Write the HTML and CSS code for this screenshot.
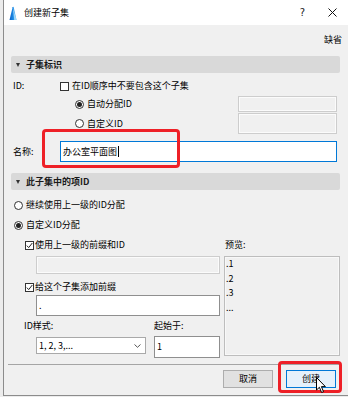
FILE: index.html
```html
<!DOCTYPE html>
<html>
<head>
<meta charset="utf-8">
<title>创建新子集</title>
<link rel="stylesheet" href="styles.css">
</head>
<body>
<div class="window">
  <div class="titlebar">
    <svg class="appicon" width="8" height="15" viewBox="0 0 8 15">
      <defs>
        <linearGradient id="g" x1="0" y1="0" x2="1" y2="0">
          <stop offset="0" stop-color="#0a62c8"/>
          <stop offset="0.55" stop-color="#1e8ee8"/>
          <stop offset="1" stop-color="#7cc4f4"/>
        </linearGradient>
      </defs>
      <path d="M0.5 14 L3.6 1.2 Q4 0.4 4.6 1 L7.6 14 Z" fill="url(#g)"/>
      <path d="M3.9 2 L7.6 14 L5.2 14 Z" fill="#9fd6f8"/>
    </svg>
    <span class="title">创建新子集</span>
    <span class="help">?</span>
    <svg class="close" width="9" height="9" viewBox="0 0 9 9"><path d="M0.5 0.5 L8.5 8.5 M8.5 0.5 L0.5 8.5" stroke="#111" stroke-width="1"/></svg>
  </div>

  <div class="content">
    <div class="defaults">缺省</div>

    <div class="sechead"><span class="tri"></span>子集标识</div>
    <div class="row r-id">
      <span class="lbl">ID:</span>
      <span class="cb"></span>
      <span>在ID顺序中不要包含这个子集</span>
    </div>
    <div class="row r-auto">
      <span class="radio on"></span>
      <span class="grow">自动分配ID</span>
      <span class="dbox b1"></span>
    </div>
    <div class="row r-custom">
      <span class="radio"></span>
      <span class="grow">自定义ID</span>
      <span class="dbox b2"></span>
    </div>
    <div class="row r-name">
      <span class="lbl">名称:</span>
      <div class="nameinput">办公室平面图<span class="caret"></span></div>
    </div>

    <div class="sechead sec2"><span class="tri"></span>此子集中的项ID</div>
    <div class="row r-inherit">
      <span class="radio"></span>
      <span>继续使用上一级的ID分配</span>
    </div>
    <div class="row r-customid">
      <span class="radio on"></span>
      <span>自定义ID分配</span>
    </div>

    <div class="idarea">
      <div class="leftcol">
        <div class="row cbrow">
          <span class="cb on"><svg width="7" height="7" viewBox="0 0 7 7"><path d="M0.8 3.6 L2.7 5.6 L6.3 1" fill="none" stroke="#222" stroke-width="1"/></svg></span>
          <span>使用上一级的前缀和ID</span>
        </div>
        <div class="dbox parentprefix"></div>
        <div class="row cbrow cbrow2">
          <span class="cb on"><svg width="7" height="7" viewBox="0 0 7 7"><path d="M0.8 3.6 L2.7 5.6 L6.3 1" fill="none" stroke="#222" stroke-width="1"/></svg></span>
          <span>给这个子集添加前缀</span>
        </div>
        <div class="textbox prefix">.</div>
        <div class="labels">
          <span class="l-style">ID样式:</span>
          <span class="l-start">起始于:</span>
        </div>
        <div class="controls">
          <div class="select">1, 2, 3,...<svg class="chev" width="7" height="4" viewBox="0 0 7 4"><path d="M0.5 0.5 L3.5 3.3 L6.5 0.5" fill="none" stroke="#444" stroke-width="0.9"/></svg></div>
          <div class="textbox start">1</div>
        </div>
      </div>
      <div class="rightcol">
        <div class="plabel">预览:</div>
        <div class="preview">
          <div>.1</div>
          <div>.2</div>
          <div>.3</div>
          <div>...</div>
        </div>
      </div>
    </div>

    <div class="separator"></div>
    <div class="buttons">
      <div class="btn">取消</div>
      <div class="btn primary">创建</div>
    </div>
  </div>

  <div class="mark mark-name"></div>
  <div class="mark mark-create"></div>
  <svg class="cursor" width="11" height="17" viewBox="0 0 11 17"><path d="M0.5 0.5 L0.5 13 L3.4 10.3 L5.6 15.5 L7.5 14.7 L5.4 9.6 L9.4 9.6 Z" fill="#fff" stroke="#000" stroke-width="1" stroke-linejoin="round"/></svg>
</div>
</body>
</html>
```

FILE: styles.css
```css
* { box-sizing: border-box; }
html, body { margin: 0; padding: 0; }
body {
  width: 348px;
  height: 397px;
  overflow: hidden;
  background: #ececec;
  font-family: "Noto Sans CJK SC", "Microsoft YaHei", sans-serif;
  font-size: 9px;
  color: #000;
}
.window {
  position: relative;
  margin-left: 3px;
  width: 345px;
  height: 396px;
  border-left: 1px solid #8c8c8c;
  border-bottom: 1px solid #8c8c8c;
  background: #f0f0f0;
  display: flex;
  flex-direction: column;
}
.titlebar {
  height: 25px;
  background: #fff;
  display: flex;
  align-items: center;
  padding-left: 5px;
  flex: none;
}
.appicon { flex: none; margin-top: 1px; }
.title { margin-left: 7px; font-size: 9px; line-height: 12px; }
.help { margin-left: auto; font-size: 10px; line-height: 12px; font-family: "DejaVu Sans", sans-serif; color: #222; }
.close { margin-left: 23px; margin-right: 11px; }

.content {
  padding: 0 8px 0 7px;
  display: flex;
  flex-direction: column;
}
.defaults {
  margin-top: 8px;
  height: 14px;
  line-height: 14px;
  text-align: right;
  padding-right: 0;
  margin-right: -2px;
}
.sechead {
  margin-top: 9px;
  height: 17px;
  line-height: 17px;
  background: #d9d9d9;
  border-radius: 2px;
  font-weight: bold;
  color: #1a1a1a;
  display: flex;
  align-items: center;
}
.sec2 { margin-top: 11px; }
.tri {
  width: 0; height: 0;
  margin-left: 5px;
  margin-right: 6px;
  border-left: 2.5px solid transparent;
  border-right: 2.5px solid transparent;
  border-top: 4px solid #333;
}
.row {
  display: flex;
  align-items: center;
  line-height: 12px;
  white-space: nowrap;
}
.lbl {
  width: 49px;
  padding-left: 2px;
  flex: none;
}
.cb {
  width: 9px; height: 9px;
  border: 1px solid #333;
  background: #fff;
  margin-right: 3px;
  flex: none;
  display: flex;
  align-items: center;
  justify-content: center;
}
.radio {
  width: 9px; height: 9px;
  border: 1px solid #333;
  border-radius: 50%;
  background: #fff;
  margin-right: 3px;
  flex: none;
  display: flex;
  align-items: center;
  justify-content: center;
}
.radio.on::after {
  content: "";
  width: 5px; height: 5px;
  border-radius: 50%;
  background: #222;
}
.grow { flex: 1; }
.dbox {
  background: #f0f0f0;
  border: 1px solid #cdcdcd;
  box-shadow: inset 0 0 0 1px #fbfbfb;
}
.r-id { margin-top: 5px; height: 16px; }
.r-auto { margin-top: 2px; height: 16px; padding-left: 64px; padding-right: 3px; align-items: stretch; }
.r-auto .radio, .r-auto .grow, .r-custom .radio, .r-custom .grow { align-self: center; }
.r-custom { margin-top: 1px; height: 21px; padding-left: 64px; padding-right: 3px; align-items: stretch; }
.b1, .b2 { width: 99px; flex: none; }
.r-name { margin-top: 7px; height: 21px; padding-right: 3px; }
.nameinput {
  flex: 1;
  height: 21px;
  background: #fff;
  border: 1px solid #0078d7;
  padding-left: 2px;
  display: flex;
  align-items: center;
  line-height: 12px;
}
.caret {
  width: 1px; height: 11px;
  background: #000;
  margin-left: 1px;
}
.r-inherit { margin-top: 7px; height: 16px; padding-left: 3px; }
.r-customid { margin-top: 4px; height: 16px; padding-left: 3px; }

.idarea {
  margin-top: 4px;
  display: flex;
  padding-left: 13px;
}
.leftcol {
  width: 196px;
  flex: none;
  display: flex;
  flex-direction: column;
}
.cbrow { height: 16px; padding-left: 1px; }
.cbrow .cb { margin-right: 1px; }
.parentprefix { margin-top: 3px; margin-left: 12px; height: 18px; }
.cbrow2 { margin-top: 5px; }
.textbox {
  background: #fff;
  border: 1px solid #8f8f8f;
  padding-left: 2px;
  line-height: 12px;
  display: flex;
  align-items: center;
}
.prefix { margin-left: 12px; height: 21px; }
.labels {
  margin-top: 2px;
  height: 16px;
  line-height: 16px;
  display: flex;
  white-space: nowrap;
}
.l-style { width: 130px; flex: none; }
.controls {
  margin-top: 2px;
  display: flex;
  align-items: flex-start;
}
.select {
  margin-left: 12px;
  margin-top: 1px;
  width: 110px;
  height: 17px;
  background: #fff;
  border: 1px solid #a9a9a9;
  padding-left: 2px;
  padding-right: 4px;
  display: flex;
  align-items: center;
  justify-content: space-between;
  line-height: 12px;
  white-space: nowrap;
}
.chev { flex: none; }
.start { margin-left: 8px; width: 66px; height: 22px; }
.rightcol {
  margin-left: 4px;
  flex: 1;
  display: flex;
  flex-direction: column;
}
.plabel { height: 16px; line-height: 16px; padding-left: 1px; }
.preview {
  margin-top: 3px;
  height: 100px;
  border: 1px solid #bdbdbd;
  box-shadow: inset 0 0 0 1px #f8f8f8;
  background: #f0f0f0;
  padding-top: 0px;
  padding-left: 1px;
  line-height: 14.5px;
}
.separator {
  margin-top: 6px;
  margin-left: -3px;
  height: 1px;
  background: #a5a5a5;
}
.buttons {
  margin-top: 5px;
  display: flex;
  justify-content: flex-end;
  padding-right: 4px;
  gap: 13px;
}
.btn {
  width: 50px;
  height: 18px;
  border: 1px solid #adadad;
  background: #e1e1e1;
  text-align: center;
  line-height: 16px;
}
.btn.primary {
  border-color: #0078d7;
  background: #e5f1fb;
}
.mark {
  position: absolute;
  border: 3px solid #ee2027;
  border-radius: 4px;
}
.mark-name { left: 38px; top: 129px; width: 138px; height: 39px; }
.mark-create { left: 274px; top: 361px; width: 64px; height: 32px; }
.cursor { position: absolute; left: 312px; top: 377px; }
```
